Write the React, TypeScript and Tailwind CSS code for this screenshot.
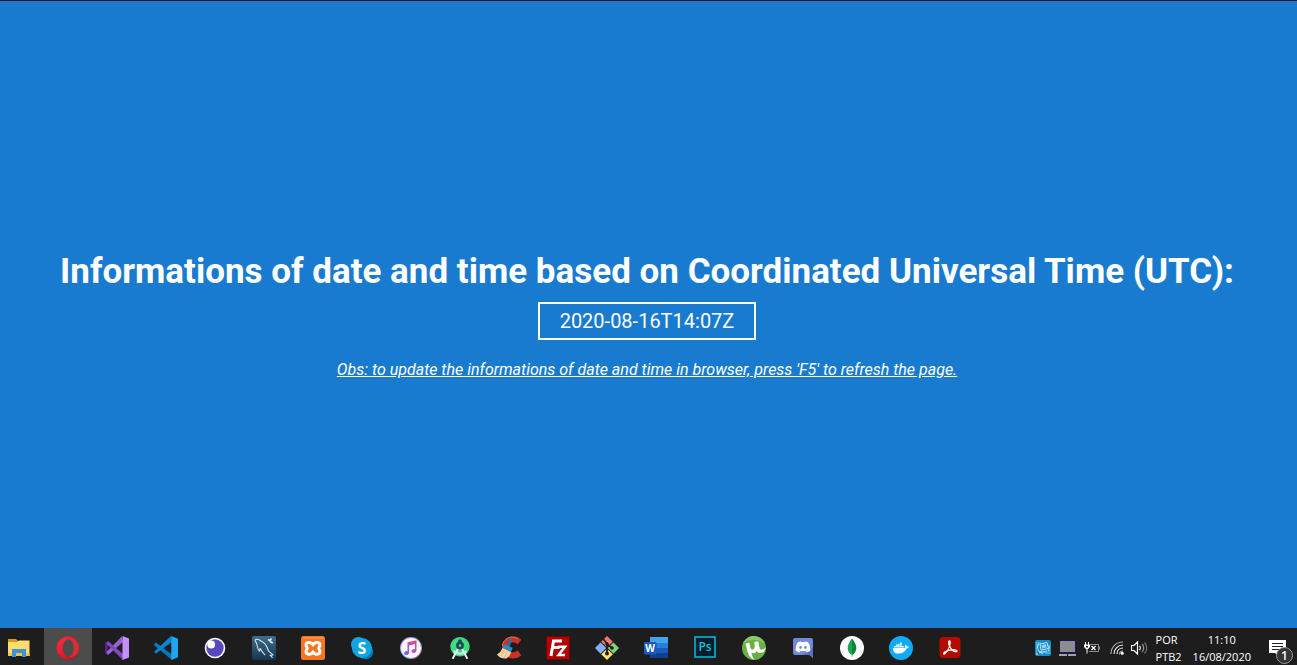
import type { ReactNode } from 'react';
import { FaDocker, FaDiscord } from 'react-icons/fa';

type TaskbarApp = { name: string; icon: ReactNode; active?: boolean };

const apps: TaskbarApp[] = [
  {
    name: 'Opera',
    active: true,
    icon: (
      <>
        <defs>
          <linearGradient id="opera-ring" x1="0" y1="0" x2="1" y2="1">
            <stop offset="0" stopColor="#ff2f3f" />
            <stop offset="0.6" stopColor="#e01626" />
            <stop offset="1" stopColor="#b50d1a" />
          </linearGradient>
        </defs>
        <path fillRule="evenodd" fill="url(#opera-ring)" d="M12 .6a11.3 11.4 0 1 0 0 22.8a11.3 11.4 0 1 0 0-22.800ZM12.300 3.600a5.600 8.400 0 1 1 0 16.800a5.600 8.400 0 1 1 0-16.800Z" />
        <path fill="#d5303a" d="M13 3.400c5-1.400 9.600 2.400 9.600 8.600s-4.600 10-9.600 8.600c3-.6 4.900-4 4.900-8.600s-1.900-8-4.900-8.600Z" />
      </>
    ),
  },
  {
    name: 'Visual Studio',
    icon: (
      <>
        <path fill="#52218a" d="M0 6.200 3 5v14l-3-1.200Z" />
        <path fill="#9b5fd6" d="M3 19 1.500 16 17 .3 18 6Z" />
        <path fill="#8148bd" d="M3 5 18 18v6L1.500 8Z" />
        <path fill="#c390fa" d="m17.500 0 6.500 2.600v18.800L17.500 24Z" />
      </>
    ),
  },
  {
    name: 'Visual Studio Code',
    icon: (
      <>
        <path fill="#0079be" d="m0 8.300 2-1.800L18 18.500V24L.3 9.400Z" />
        <path fill="#0a84cc" d="M2 17.600 0 15.800 17 0l1 6Z" />
        <path fill="#22a5f1" d="m17.300 0 6.700 2.700v18.600L17.300 24Z" />
      </>
    ),
  },
  {
    name: 'Insomnia',
    icon: (
      <>
        <circle cx="12" cy="12" r="10.300" fill="#fff" />
        <circle cx="12" cy="12" r="8.700" fill="#5849be" />
        <circle cx="8.200" cy="8.500" r="3.900" fill="#fff" />
      </>
    ),
  },
  {
    name: 'MySQL Workbench',
    icon: (
      <>
        <defs>
          <linearGradient id="workbench-tile" x1="0" y1="0" x2="0" y2="1">
            <stop offset="0" stopColor="#3f6d8f" />
            <stop offset="1" stopColor="#153650" />
          </linearGradient>
        </defs>
        <rect width="24" height="24" rx="2" fill="url(#workbench-tile)" />
        <path fill="none" stroke="#d9e5ec" strokeWidth="1.100" strokeLinejoin="round" d="M3 4c2-1.500 4-.800 6 1 4 1.600 6 5 7.300 9.500.800 2 3 2 4.700 4.500l-3 .2 2.500 2.500M3 4c.300 2 1.800 2.500 2 5 .5 2.500 1 4.500 2.300 6.300.500-1 .500-2.400 1-2.800 1 2.500 3 4.500 4.800 6.500" />
        <path fill="none" stroke="#d9e5ec" strokeWidth="1.800" d="m16 3.500 2 1 1.500-2m-1.500 2 .8 1.500 2 .8" />
      </>
    ),
  },
  {
    name: 'XAMPP',
    icon: (
      <>
        <rect width="24" height="24" rx="2.500" fill="#f37623" />
        <path fill="#ffa46c" d="M1 1.500h22v1H1Z" />
        <path fill="none" stroke="#fff" strokeWidth="3" strokeLinejoin="round" d="M12 9C10.500 5.500 5 5.500 5 9c0 1.500 1.200 2 1.200 3.300S5 14 5 15.500c0 3.500 5.500 3.500 7 .3 1.500 3.200 7 3.200 7-.3 0-1.500-1.200-1.900-1.200-3.200S19 10.500 19 9c0-3.500-5.500-3.500-7 0Z" />
      </>
    ),
  },
  {
    name: 'Skype',
    icon: (
      <>
        <circle cx="8.500" cy="8.500" r="7.500" fill="#1fa4dc" />
        <circle cx="15.700" cy="15.700" r="7.500" fill="#0078c8" />
        <circle cx="12" cy="12" r="10" fill="#0fa5e2" />
        <text x="12" y="17.500" textAnchor="middle" fontSize="16" fontWeight="700" fill="#fff" className="font-['Open_Sans',sans-serif]">S</text>
      </>
    ),
  },
  {
    name: 'iTunes',
    icon: (
      <>
        <defs>
          <linearGradient id="itunes-ring" x1="0" y1="0" x2="1" y2="1">
            <stop offset="0" stopColor="#dd74e8" />
            <stop offset="0.5" stopColor="#67c9ee" />
            <stop offset="1" stopColor="#ef5d76" />
          </linearGradient>
          <linearGradient id="itunes-note" x1="0" y1="1" x2="1" y2="0">
            <stop offset="0" stopColor="#7667e6" />
            <stop offset="0.5" stopColor="#b053c8" />
            <stop offset="1" stopColor="#f04a6e" />
          </linearGradient>
        </defs>
        <circle cx="12" cy="12" r="11" fill="url(#itunes-ring)" />
        <circle cx="12" cy="12" r="10" fill="#fbf7fc" />
        <path fill="url(#itunes-note)" d="m8.500 6.300 9-2v10c0 3.200-4.900 3.600-4.900.8 0-2 2.400-2 3.300-2.200V8.100l-5.800 1.300v7c0 3.200-5 3.600-5 .8 0-2 2.500-2.100 3.400-2.300Z" />
      </>
    ),
  },
  {
    name: 'Android Studio',
    icon: (
      <>
        <circle cx="12" cy="10.700" r="9.700" fill="#3ddc84" />
        <path fill="#cfe3ea" d="M6 14c3.500 3.200 8.500 3.200 12 0l1 2c-4 3.500-10 3.500-14 0Z" />
        <path fill="none" stroke="#e4eef5" strokeWidth="2" strokeLinecap="round" d="m10.500 12-5.500 10M13.500 12l5.500 10" />
        <rect x="10.300" y="3.500" width="3.400" height="4" rx="1" fill="#1b4b50" />
        <circle cx="12" cy="9.500" r="3.900" fill="#1b4b50" />
        <circle cx="12" cy="9.500" r="1.200" fill="#70dba5" />
      </>
    ),
  },
  {
    name: 'CCleaner',
    icon: (
      <>
        <path fill="none" stroke="#c83327" strokeWidth="6" d="M22.500 6C16.500.5 8 4 8 11.500c0 7 8 10.500 14.500 5.500" />
        <path fill="none" stroke="#ed6754" strokeWidth="1" d="M21 2.800C14-1.500 6 3 5.300 10" />
        <path stroke="#1479b6" strokeWidth="2.400" strokeLinecap="round" d="m14 3.300-2.500 7" />
        <path fill="#258fc9" d="m7.500 8.500 8.200 3.300-1.600 4-8.800-4Z" />
        <path fill="#f3d5a5" d="m5.500 12 8.500 4c-.4 3-2.300 5-4.800 6.500C5.500 23 2 21.500 0 18.500c2.500-1.300 4.200-3.500 5.500-6.500Z" />
        <path stroke="#d0a570" strokeWidth=".6" d="m7.500 14-4 6m7.500-5-4 7" />
      </>
    ),
  },
  {
    name: 'FileZilla',
    icon: (
      <>
        <rect x=".5" y=".5" width="23" height="23" fill="#b50000" stroke="#780000" strokeDasharray="1.500 1" />
        <g fill="none" stroke="#fff" strokeWidth="3">
          <path d="M5 20 7.500 5H16M6 11.500h7.500" />
          <path strokeWidth="2.500" d="M12 10.800h7L12.500 19h6.500" />
        </g>
      </>
    ),
  },
  {
    name: 'Git',
    icon: (
      <>
        <path fill="#f87579" d="m12 0 5.800 5.800L12 11.500 6.200 5.800Z" />
        <path fill="#82b0ff" d="m5.500 6.500 5.800 5.500-5.800 5.800L0 12Z" />
        <path fill="#7fd477" d="m18.500 6.500 5.500 5.500-5.500 5.800-5.800-5.800Z" />
        <path fill="#ffe16b" d="m12 12.700 5.800 5.500L12 24l-5.800-5.800Z" />
        <path fill="none" stroke="#211e1d" strokeWidth="1.800" d="m8.500 3.200 3.500 4.600v9M12 8l5 4" />
        <g fill="#211e1d">
          <circle cx="12" cy="8" r="1.800" />
          <circle cx="17" cy="12" r="1.800" />
          <circle cx="12" cy="17.500" r="2" />
        </g>
      </>
    ),
  },
  {
    name: 'Word',
    icon: (
      <>
        <path fill="#41a5ee" d="M6 1h18v6H6Z" />
        <path fill="#2b7cd3" d="M6 7h18v5H6Z" />
        <path fill="#185abd" d="M6 12h18v5H6Z" />
        <path fill="#103f91" d="M6 17h18v5H6Z" />
        <rect y="6" width="12.500" height="12.500" rx="1" fill="#185abd" />
        <text x="6.200" y="15.800" textAnchor="middle" fontSize="10" fontWeight="700" fill="#fff" className="font-['Open_Sans',sans-serif]">W</text>
      </>
    ),
  },
  {
    name: 'Photoshop',
    icon: (
      <>
        <rect x="2" y="1" width="20" height="20" fill="#071e2a" stroke="#00b6d9" strokeWidth="1.600" />
        <text x="12" y="15.300" textAnchor="middle" fontSize="12" fontWeight="600" fill="#16bfe0" className="font-['Open_Sans',sans-serif]">Ps</text>
      </>
    ),
  },
  {
    name: 'µTorrent',
    icon: (
      <>
        <circle cx="12" cy="12" r="12" fill="#68b245" />
        <path fill="#8cc96a" d="M1 8C5-3 19-2 23 8c-5-5-16-6-22 0Z" />
        <path fill="#fff" d="m3.500 7.500 4-.8c.5 3.500.9 6.800 3 6.800 2.500 0 2.500-3.500 1.700-7.500l4.200-.8c.6 4.500 1 8.300 2.800 8.500 1.300.2 2.800-.7 4.500-2.300-.5 3.500-2.200 5.400-4.700 5.600-2 .2-3.300-.5-4.200-2-1.300 2.200-3.600 2.600-5.300 1.800.5 3 1.300 5 3 7C7.800 22 6.300 18.500 5.300 15Z" />
      </>
    ),
  },
  {
    name: 'Discord',
    icon: (
      <>
        <path fill="#7289da" d="M4 2h16q2 0 2 2v18l-3.500-3H4q-2 0-2-2V4q0-2 2-2Z" />
        <path fill="#5c70bb" d="M22 11v11l-3.500-3H12Z" />
        <FaDiscord x="4" y="3" width="16" height="16" color="#fff" />
      </>
    ),
  },
  {
    name: 'MongoDB Compass',
    icon: (
      <>
        <circle cx="12" cy="12" r="12" fill="#fff" />
        <path fill="#13aa52" d="M12 2.500C9 6 7.700 9 7.700 12.300c0 3 1.800 5.200 4.300 7.200Z" />
        <path fill="#11813f" d="M12 2.500c3 3.500 4.300 6.500 4.300 9.800 0 3-1.800 5.200-4.300 7.200Z" />
        <path stroke="#a8c8b5" d="M12 18v3.500" />
      </>
    ),
  },
  {
    name: 'Docker',
    icon: (
      <>
        <circle cx="12" cy="12" r="12" fill="#0fabf6" />
        <FaDocker x="4" y="4" width="16" height="16" color="#fff" />
      </>
    ),
  },
  {
    name: 'Acrobat Reader',
    icon: (
      <>
        <rect x="1.500" y="1" width="21" height="21" rx="3.500" fill="#b30b00" />
        <path fill="none" stroke="#fff" strokeWidth="1.300" strokeLinejoin="round" d="M11.500 5c-1.500 0-.9 3 .3 5.500 1.400 3 4.200 5.200 6.200 5.200 1.800 0 1-1.800-1.200-1.900-4.500-.2-7.300.5-10 2.300-2 1.500-1.200 2.600.2 1.300 2.200-2 4.800-7 5.200-10.400C12.300 5.500 12 5 11.500 5Z" />
      </>
    ),
  },
];

function TaskbarButton({ app }: { app: TaskbarApp }) {
  return (
    <button
      type="button"
      aria-label={app.name}
      className={`flex h-full min-w-0 flex-[0_1_48px] items-center justify-center pt-[3px] ${app.active ? 'bg-[#4c4c4c]' : 'bg-transparent'}`}
    >
      <svg viewBox="0 0 24 24" aria-hidden="true" className="size-6 shrink-0">
        {app.icon}
      </svg>
    </button>
  );
}

function Tray() {
  return (
    <div className="flex h-full shrink-0 items-center text-[11px] leading-4 text-white">
      <div className="flex items-center gap-2 pt-[3px]">
        <button type="button" aria-label="Graphics settings">
          <svg viewBox="0 0 16 16" className="size-4">
            <rect width="16" height="16" rx="2" fill="#1689ca" />
            <path fill="#3fb4e4" d="M1 2h5L2 8v6l-1 1Zm9 12 5-5v5Z" />
            <path fill="none" stroke="#bfe6f6" d="m5 4 7-1.500 1.500 6L6 10Z" />
            <path fill="#8fd0ee" d="m6.500 5 4.500-1 .7 3.500-4.700 1ZM4 11l8-.5v2L4 13Z" />
            <path fill="none" stroke="#bfe6f6" d="M3.500 4C1.500 8 3 12 8 14m5-3c1.500-2 1.500-4 1-6" />
            <path fill="#e9a23b" d="M1 13h2v2H1Z" />
          </svg>
        </button>
        <button type="button" aria-label="Touchpad">
          <svg viewBox="0 0 17 16" className="h-4 w-[17px]">
            <path fill="#8c8c8c" d="M1 1h15v11H1Z" />
            <path fill="none" stroke="#15156f" d="M0 .5h16.500V13" />
            <path fill="#a2a2a2" d="M0 14h8v2H0Zm9 0h8v2H9Z" />
            <path stroke="#15156f" d="M0 13.500h17" />
          </svg>
        </button>
        <button type="button" aria-label="Battery">
          <svg viewBox="0 0 16 12" className="h-3 w-4">
            <path fill="none" stroke="#8d8d8d" d="M6 2.500h8.500v7H5M15.500 4.500v3" />
            <path stroke="#fff" d="M1.500 0v3M4.500 0v3M3 6v5.500" />
            <path fill="#fff" d="M0 2.500h6V5L4 7H2L0 5Z" />
            <path fill="#1d1d1d" d="M2 4h2v1.500H2Z" />
            <path stroke="#fff" strokeWidth="1.300" d="m7.500 4 4 4m0-4-4 4" />
          </svg>
        </button>
      </div>
      <div className="flex items-center gap-[7px] pt-[3px] pl-[10px]">
        <button type="button" aria-label="Wi-Fi">
          <svg viewBox="0 0 14 14" className="size-[14px]">
            <g fill="none" stroke="#f1f1f1" strokeWidth="1.200">
              <path d="M1 13C1 6 6 1 13 1" stroke="#aaa" />
              <path d="M4 13c0-5 4-9 9-9M7 13c0-3.500 2.500-6 6-6" />
              <path d="M9.500 13.500c0-2 1.500-3.500 3.500-3.500" stroke="#aaa" />
            </g>
            <circle cx="12.200" cy="12.300" r="1.500" fill="#fff" />
          </svg>
        </button>
        <button type="button" aria-label="Volume">
          <svg viewBox="0 0 17 14" className="h-[14px] w-[17px]">
            <path fill="none" stroke="#fff" strokeWidth="1.200" d="M.5 4.500h2.500l3.500-3.500v12l-3.500-3.500H.5ZM8.500 5c1 1 1 3 0 4" />
            <path fill="none" stroke="#999" strokeWidth="1.200" d="M11 3c2.200 2 2.200 6 0 8" />
            <path fill="none" stroke="#707070" strokeWidth="1.200" d="M13.500 1.500c3 3 3 8 0 11" />
          </svg>
        </button>
      </div>
      <button type="button" className="flex flex-col items-start gap-px pt-1 pl-2 text-left">
        <span>POR</span>
        <span>PTB2</span>
      </button>
      <button type="button" className="flex flex-col items-center gap-px pt-1 pl-[11px]">
        <span>11:10</span>
        <span>16/08/2020</span>
      </button>
      <button type="button" aria-label="Notifications, 1 new" className="flex h-full items-end pr-[3px] pl-[17px]">
        <svg viewBox="0 0 26 27" className="h-[27px] w-[26px]">
          <path fill="#fff" d="M1 2h17v13h-7v4l-4-4H1Z" />
          <path stroke="#222" d="M4 5.500h11M4 8.500h11M4 11.500h8" />
          <circle cx="16.500" cy="17.500" r="8" fill="#343434" stroke="#999" />
          <text x="16.500" y="21.500" textAnchor="middle" fontSize="12" fontWeight="600" fill="#fff">1</text>
        </svg>
      </button>
    </div>
  );
}

export default function App() {
  return (
    <div className="flex h-screen flex-col border-t border-[#171717] bg-[#197bcf] font-[Roboto,sans-serif] text-white">
      <main className="flex flex-1 flex-col items-center justify-center pr-[3px] text-center">
        <h1 className="text-[35px] leading-[44px] font-bold">
          Informations of date and time based on Coordinated Universal Time (UTC):
        </h1>
        <time dateTime="2020-08-16T14:07Z" className="mt-2 border-2 border-white px-5 py-1 text-[20px] leading-[26px]">
          2020-08-16T14:07Z
        </time>
        <p className="mt-5 text-[16px] leading-[19px] italic underline">
          Obs: to update the informations of date and time in browser, press 'F5' to refresh the page.
        </p>
      </main>
      <footer className="flex h-[37px] shrink-0 items-center justify-between bg-[#1d1d1d] font-['Open_Sans',sans-serif]">
        <nav aria-label="Taskbar" className="flex h-full min-w-0 flex-1 gap-px">
          <button type="button" aria-label="File Explorer" className="flex h-full w-[43px] shrink-0 items-center justify-center pt-[3px] pr-[5px]">
            <svg viewBox="0 0 24 24" aria-hidden="true" className="size-6">
              <path fill="#d99816" d="M1 3h8l2 2v3H1Z" />
              <path fill="#ffdc70" d="M1 6h9l2-1.500h10.500V20H1Z" />
              <path fill="#f5c34c" d="M1 17h21.500v3H1Z" />
              <path fill="#3c94d6" d="M5 13h14v8h-4v-4H9v4H5Z" />
            </svg>
          </button>
          {apps.map((app) => (
            <TaskbarButton key={app.name} app={app} />
          ))}
        </nav>
        <Tray />
      </footer>
    </div>
  );
}
